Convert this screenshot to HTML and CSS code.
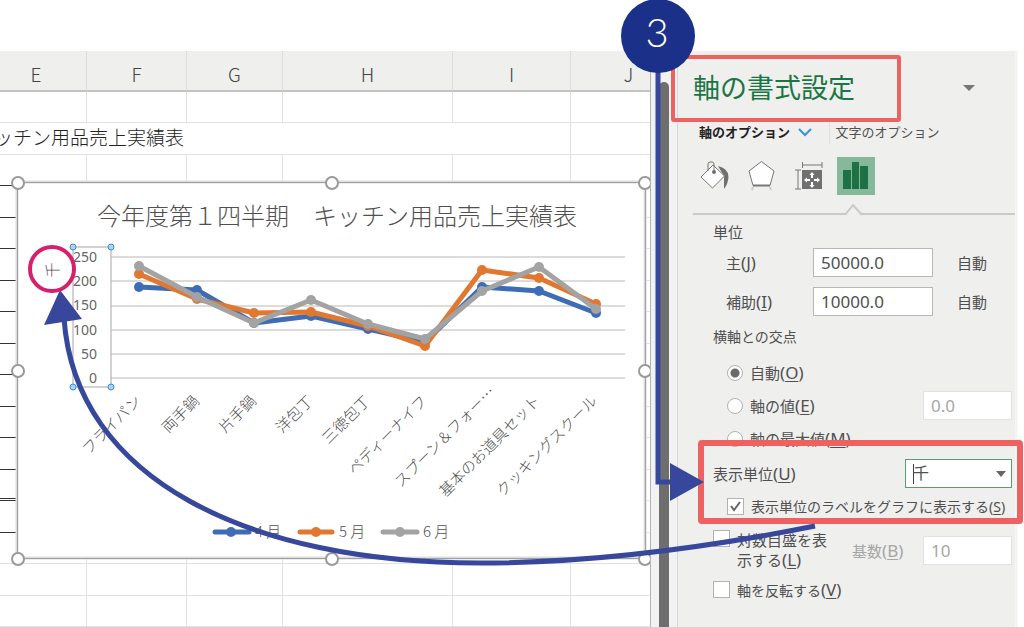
FILE: index.html
```html
<!DOCTYPE html>
<html lang="ja">
<head>
<meta charset="utf-8">
<title>軸の書式設定</title>
<link rel="stylesheet" href="styles.css">
</head>
<body>
<div class="app">
  <main class="sheet">
    <table class="grid">
      <colgroup><col class="c-e"><col class="c-f"><col class="c-g"><col class="c-h"><col class="c-i"><col class="c-j"></colgroup>
      <thead><tr><th>E</th><th>F</th><th>G</th><th>H</th><th>I</th><th>J</th></tr></thead>
      <tbody>
        <tr><td></td><td></td><td></td><td></td><td></td><td></td></tr>
        <tr><td colspan="5" class="heading">ッチン用品売上実績表</td><td></td></tr>
        <tr class="ruled"><td></td><td></td><td></td><td></td><td></td><td></td></tr>
        <tr class="ruled"><td></td><td></td><td></td><td></td><td></td><td></td></tr>
        <tr class="ruled"><td></td><td></td><td></td><td></td><td></td><td></td></tr>
        <tr class="ruled"><td></td><td></td><td></td><td></td><td></td><td></td></tr>
        <tr class="ruled"><td></td><td></td><td></td><td></td><td></td><td></td></tr>
        <tr class="ruled"><td></td><td></td><td></td><td></td><td></td><td></td></tr>
        <tr class="ruled"><td></td><td></td><td></td><td></td><td></td><td></td></tr>
        <tr class="ruled"><td></td><td></td><td></td><td></td><td></td><td></td></tr>
        <tr class="ruled"><td></td><td></td><td></td><td></td><td></td><td></td></tr>
        <tr class="ruled"><td></td><td></td><td></td><td></td><td></td><td></td></tr>
        <tr class="ruled total"><td></td><td></td><td></td><td></td><td></td><td></td></tr>
        <tr class="ruled"><td></td><td></td><td></td><td></td><td></td><td></td></tr>
        <tr><td></td><td></td><td></td><td></td><td></td><td></td></tr>
        <tr><td></td><td></td><td></td><td></td><td></td><td></td></tr>
        <tr><td></td><td></td><td></td><td></td><td></td><td></td></tr>
        <tr><td></td><td></td><td></td><td></td><td></td><td></td></tr>
      </tbody>
    </table>
    <svg class="chart" width="651" height="400" viewBox="0 170 651 400">
      <rect class="frame-back" x="17" y="182" width="628" height="376"/>
      <path class="frame" d="M17.500 182.500H645.500V558.500H17.500Z"/>
      <text class="chart-title" x="337" y="225">今年度第１四半期　キッチン用品売上実績表</text>
      <path class="gridlines" d="M111 257H625M111 281H625M111 306H625M111 330H625M111 354H625M111 378H625"/>
      <rect class="axis-box" x="73" y="247" width="38" height="140"/>
      <g class="axis">
        <text x="97" y="262">250</text><text x="97" y="286">200</text><text x="97" y="310">150</text>
        <text x="97" y="335">100</text><text x="97" y="359">50</text><text x="97" y="383">0</text>
      </g>
      <g class="axis-grips"><circle cx="73" cy="247" r="3"/><circle cx="111" cy="247" r="3"/><circle cx="73" cy="387" r="3"/><circle cx="111" cy="387" r="3"/></g>
      <text class="unit" transform="translate(58 270) rotate(-90)">千</text>
      <g class="series april"><polyline points="139,287 197,290 254,323 311,316 368,329 425,342 482,287 539,291 596,313"/>
        <circle cx="139" cy="287" r="5"/><circle cx="197" cy="290" r="5"/><circle cx="254" cy="323" r="5"/><circle cx="311" cy="316" r="5"/><circle cx="368" cy="329" r="5"/><circle cx="425" cy="342" r="5"/><circle cx="482" cy="287" r="5"/><circle cx="539" cy="291" r="5"/><circle cx="596" cy="313" r="5"/></g>
      <g class="series may"><polyline points="139,274 197,299 254,313 311,312 368,326 425,346 482,270 539,278 596,304"/>
        <circle cx="139" cy="274" r="5"/><circle cx="197" cy="299" r="5"/><circle cx="254" cy="313" r="5"/><circle cx="311" cy="312" r="5"/><circle cx="368" cy="326" r="5"/><circle cx="425" cy="346" r="5"/><circle cx="482" cy="270" r="5"/><circle cx="539" cy="278" r="5"/><circle cx="596" cy="304" r="5"/></g>
      <g class="series june"><polyline points="139,266 197,297 254,323 311,300 368,324 425,339 482,291 539,267 596,309"/>
        <circle cx="139" cy="266" r="5"/><circle cx="197" cy="297" r="5"/><circle cx="254" cy="323" r="5"/><circle cx="311" cy="300" r="5"/><circle cx="368" cy="324" r="5"/><circle cx="425" cy="339" r="5"/><circle cx="482" cy="291" r="5"/><circle cx="539" cy="267" r="5"/><circle cx="596" cy="309" r="5"/></g>
      <g class="categories">
        <text transform="translate(142 402) rotate(-45)">フライパン</text>
        <text transform="translate(200 402) rotate(-45)">両手鍋</text>
        <text transform="translate(257 402) rotate(-45)">片手鍋</text>
        <text transform="translate(314 402) rotate(-45)">洋包丁</text>
        <text transform="translate(371 402) rotate(-45)">三徳包丁</text>
        <text transform="translate(428 402) rotate(-45)">ペディーナイフ</text>
        <text transform="translate(496 393) rotate(-45)">スプーン＆フォー…</text>
        <text transform="translate(541 402) rotate(-45)">基本のお道具セット</text>
        <text transform="translate(598 402) rotate(-45)">クッキングスクール</text>
      </g>
      <g class="series april"><path d="M215 532H249"/><circle cx="231" cy="532" r="5"/></g>
      <g class="series may"><path d="M300 532H332"/><circle cx="316" cy="532" r="5"/></g>
      <g class="series june"><path d="M383 532H417"/><circle cx="400" cy="532" r="5"/></g>
      <g class="legend"><text x="255" y="537">4 月</text><text x="339" y="537">5 月</text><text x="423" y="537">6 月</text></g>
      <g class="grips"><circle cx="18" cy="183" r="6"/><circle cx="332" cy="183" r="6"/><circle cx="645" cy="183" r="6"/><circle cx="18" cy="371" r="6"/><circle cx="645" cy="371" r="6"/><circle cx="18" cy="559" r="6"/><circle cx="332" cy="559" r="6"/><circle cx="645" cy="559" r="6"/></g>
    </svg>
  </main>

  <div class="scroll"><div class="thumb"></div></div>

  <aside class="pane">
    <header class="pane-head">
      <h1>軸の書式設定</h1>
      <button class="menu" aria-label="メニュー"><svg width="12" height="6"><path d="M0 0H12L6 6Z"/></svg></button>
    </header>
    <nav class="tabs">
      <button class="tab current">軸のオプション <svg width="14" height="9"><path d="M1 1L7 7L13 1"/></svg></button>
      <button class="tab">文字のオプション</button>
    </nav>
    <div class="icons">
      <button aria-label="塗りつぶしと線"><svg width="38" height="38"><path class="ink" d="M22 9Q33 12 32.500 20Q32 27 28 32V19Z"/><path class="line" d="M17 8L28.500 19L16.500 31L5 20Z"/><path class="none" d="M12 14V7Q12 5 14 5H16Q18 5 18 7V15"/><circle class="ink" cx="18" cy="15" r="2"/></svg></button>
      <button aria-label="効果"><svg width="38" height="38"><path class="line" d="M18.500 4.500L31 14L27 28.500H10L6 14Z"/><path class="heavy" d="M10 28.500H27"/><path class="faint" d="M10 30L9 33M27 30L28 33"/></svg></button>
      <button aria-label="サイズとプロパティ"><svg width="38" height="38"><path class="ink" d="M12 13H32V32H12Z"/><path class="none" d="M13 8H32M12.500 5V11M32 5V11M8 13V32M5 13H11M5 32H11"/><path class="arrows" d="M22 15L24.500 18H23V21H21V18H19.500ZM22 31L24.500 28H23V25H21V28H19.500ZM14 23L17 20.500V22H20V24H17V25.500ZM30 23L27 20.500V22H24V24H27V25.500Z"/></svg></button>
      <button class="active" aria-label="軸のオプション"><svg width="38" height="38"><path class="bars" d="M6 13H14V32H6ZM15 5H22V32H15ZM23 9H31V32H23Z"/></svg><svg class="notch" width="20" height="12"><path d="M1 11L9 1L18 11"/></svg></button>
    </div>
    <form class="options">
      <div class="row caption">単位</div>
      <div class="row field"><label for="major">主<span class="key">(<u>J</u>)</span></label><input id="major" type="text" value="50000.0"><span class="auto">自動</span></div>
      <div class="row field second"><label for="minor">補助<span class="key">(<u>I</u>)</span></label><input id="minor" type="text" value="10000.0"><span class="auto">自動</span></div>
      <div class="row cross">横軸との交点</div>
      <div class="row choice"><input type="radio" name="cross" id="auto" checked><label for="auto">自動<span class="key">(<u>O</u>)</span></label></div>
      <div class="row choice value"><input type="radio" name="cross" id="val"><label for="val">軸の値<span class="key">(<u>E</u>)</span></label><input class="end" type="text" value="0.0" aria-label="軸の値" disabled></div>
      <div class="row choice"><input type="radio" name="cross" id="max"><label for="max">軸の最大値<span class="key">(<u>M</u>)</span></label></div>
      <div class="row units"><label for="unit">表示単位<span class="key">(<u>U</u>)</span></label><select id="unit"><option>千</option></select></div>
      <div class="row choice show"><input type="checkbox" id="show" checked><label for="show">表示単位のラベルをグラフに表示する(<u>S</u>)</label></div>
      <div class="row log"><input type="checkbox" id="log"><label class="wrap" for="log">対数目盛を表示する<span class="key">(<u>L</u>)</span></label><label class="base" for="base">基数<span class="key">(<u>B</u>)</span></label><input class="end" id="base" type="text" value="10" disabled></div>
      <div class="row reverse"><input type="checkbox" id="rev"><label for="rev">軸を反転する<span class="key">(<u>V</u>)</span></label></div>
    </form>
  </aside>
  <div class="edge"></div>

  <svg class="notes" width="1024" height="627">
    <rect class="red" x="673" y="57" width="226" height="63" rx="1"/>
    <rect class="red thick" x="701" y="443" width="319" height="78" rx="1"/>
    <path class="blue" d="M658 60V482H675"/>
    <path class="blue-head" d="M670 463L704 482L670 501Z"/>
    <path class="blue" d="M815 526C700 549 590 563 480 563C250 563 75 480 64 318"/>
    <path class="blue-head" d="M60 290L44 325L82 319Z"/>
    <circle class="pink" cx="52" cy="269" r="22"/>
    <circle class="badge" cx="658" cy="36" r="37"/>
    <text class="step" x="657" y="47">3</text>
  </svg>
</div>
</body>
</html>
```
FILE: styles.css
```css
* { box-sizing: border-box; }
body {
  margin: 0;
  background: #fff;
  color: #505050;
  font-family: "Noto Sans", "Noto Sans CJK JP", sans-serif;
  font-size: 15px;
}
button { border: 0; padding: 0; background: none; font: inherit; color: inherit; }
.app {
  position: relative;
  display: grid;
  grid-template-columns: minmax(0, 1fr) 26px 338px 9px;
  min-height: 100vh;
  padding-top: 51px;
  overflow: hidden;
}

/* worksheet */
.sheet { position: relative; overflow: hidden; height: calc(100vh - 51px); border-right: 1px solid #b4b4b4; }
.grid { table-layout: fixed; width: 701px; margin-left: -14px; border-collapse: separate; border-spacing: 0; }
.c-e { width: 101px; }
.c-f { width: 100px; }
.c-g { width: 96px; }
.c-h { width: 170px; }
.c-i { width: 118px; }
.c-j { width: 116px; }
.grid th {
  height: 41px;
  padding: 7px 0 0;
  border-bottom: 2px solid #c4c4c4;
  border-right: 1px solid #dcdcdc;
  background: #efefee;
  color: #444;
  font-family: "Noto Sans CJK JP", sans-serif;
  font-weight: 300;
  font-size: 19px;
  line-height: 30px;
}
.grid td { height: 31px; padding: 0; border-right: 1px solid #e2e2e2; border-bottom: 1px solid #e2e2e2; }
.grid tr:nth-child(even) td { height: 32px; }
.grid .ruled td:first-child { border-bottom-color: #333; }
.grid .total td:first-child { border-bottom: 3px double #333; }
.grid .heading {
  padding: 0 0 4px 8px;
  color: #222;
  font-family: "Noto Sans CJK JP", sans-serif;
  font-weight: 300;
  font-size: 19px;
  line-height: 26px;
}

/* chart */
.chart { position: absolute; left: 0; top: 119px; font-family: "Noto Sans CJK JP", sans-serif; font-weight: 300; font-size: 15px; fill: #505050; }
.frame-back { fill: #fff; stroke: #dcdcdc; stroke-width: 3; }
.frame { fill: none; stroke: #a0a0a0; }
.chart-title { font-size: 24px; text-anchor: middle; }
.gridlines { stroke: #dcdcdc; stroke-width: 2; }
.axis-box { fill: none; stroke: #a6a6a6; }
.axis { font-family: "Noto Sans", sans-serif; font-weight: 400; font-size: 14px; text-anchor: end; fill: #666; }
.axis-grips { fill: #a9d3f0; stroke: #3d8fcb; }
.unit { text-anchor: middle; }
.categories { text-anchor: end; }
.series { stroke-width: 5; stroke-linejoin: round; stroke-linecap: round; }
.series polyline { fill: none; }
.series circle { stroke: none; }
.april { stroke: #3f6db5; fill: #3f6db5; }
.may { stroke: #e27830; fill: #e27830; }
.june { stroke: #a3a3a3; fill: #a3a3a3; }
.grips { fill: #fff; stroke: #999; stroke-width: 2; }

/* scroll bar */
.scroll { padding: 31px 8px 0; background: #f2f2f2; }
.thumb { height: 100%; border-radius: 5px 5px 0 0; background: #6e6e6e; }

/* format pane */
.pane { border-left: 1px solid #d6d6d6; background: #efefee; padding-left: 15px; }
.pane-head { display: flex; align-items: center; justify-content: space-between; height: 68px; padding: 6px 40px 0 0; }
.pane-head h1 { margin: 0; color: #1c7544; font-size: 27px; font-weight: 400; line-height: 36px; }
.menu { display: flex; fill: #777; }
.tabs { display: flex; height: 25px; font-size: 13px; padding-left: 6px; }
.tab { white-space: nowrap; }
.tab + .tab { margin-left: 17px; padding-left: 5px; border-left: 1px solid #e2e2e2; }
.tab.current { font-weight: 700; color: #222; }
.tab svg { margin-left: 5px; fill: none; stroke: #3a93d0; stroke-width: 2; }
.icons { display: flex; gap: 9px; padding: 13px 0 18px 3px; border-bottom: 2px solid #cacaca; }
.icons button { position: relative; width: 38px; height: 38px; }
.icons svg { display: block; }
.icons .active { background: #86b99c; }
.ink { fill: #6f706f; }
.line { fill: #fff; stroke: #777; }
.none { fill: none; stroke: #777; }
.heavy { stroke: #777; stroke-width: 2; }
.faint { stroke: #ccc; stroke-width: 2; fill: none; }
.arrows { fill: #fff; }
.bars { fill: #1e7145; }
.icons .notch { position: absolute; left: 7px; top: 47px; fill: #efefee; stroke: #cacaca; stroke-width: 2; }
.options { padding: 0 3px 0 20px; }
.row { display: flex; align-items: center; height: 33px; white-space: nowrap; }
.row u { text-underline-offset: 2px; }
.key { font-size: 17px; line-height: 20px; }
.caption { height: 32px; }
.field { height: 30px; padding-left: 13px; }
.second { margin-top: 9px; }
.field label { width: 87px; }
.auto { margin-left: 24px; }
.cross { height: 40px; font-size: 14px; }
input[type="text"], select {
  height: 29px;
  border: 1px solid #b8b8b8;
  border-radius: 0;
  background: #fff;
  color: #505050;
  font: 17px "Noto Sans", "Noto Sans CJK JP", sans-serif;
  padding: 0 7px;
}
.field input { width: 120px; }
input.end { width: 89px; margin-left: auto; border-color: #e2e2e2; color: #a6a6a6; }
.choice { padding-left: 14px; }
input[type="radio"], input[type="checkbox"] {
  appearance: none;
  flex: none;
  width: 16px;
  height: 16px;
  margin: 0 7px 0 0;
  border: 1px solid #b2b2b2;
  background: #fff;
}
input[type="radio"] { border-radius: 50%; }
input[type="radio"]:checked { background: radial-gradient(circle, #6a6a6a 4px, #fff 5px); }
input[type="checkbox"] { width: 17px; height: 17px; }
input[type="checkbox"]:checked { background: #fff url("data:image/svg+xml,%3Csvg xmlns='http://www.w3.org/2000/svg' width='15' height='15'%3E%3Cpath d='M3 7L6 11L12 3' fill='none' stroke='%23666' stroke-width='2'/%3E%3C/svg%3E"); }
.units { height: 36px; }
.units select {
  width: 107px;
  margin-left: auto;
  border-color: #5b9b78;
  appearance: none;
  font-size: 16px;
  background: linear-gradient(#444, #444) 7px 4px / 1px 20px no-repeat, url("data:image/svg+xml,%3Csvg xmlns='http://www.w3.org/2000/svg' width='10' height='6'%3E%3Cpath d='M0 0H10L5 6Z' fill='%23666'/%3E%3C/svg%3E") 90px 11px no-repeat, #fff;
}
.show { height: 30px; font-size: 14px; }
.log { height: 52px; padding-top: 6px; }
.log input[type="checkbox"] { align-self: flex-start; margin-top: 3px; }
.wrap { width: 100px; white-space: normal; line-height: 20px; }
.base { margin-left: 15px; color: #a6a6a6; }
.reverse { font-size: 14px; }
.edge { width: 3px; background: #f6f6f5; }

/* callouts */
.notes { position: absolute; left: 0; top: 0; pointer-events: none; }
.red { fill: none; stroke: #ee6161; stroke-width: 4; }
.thick { stroke-width: 6; }
.blue { fill: none; stroke: #37489c; stroke-width: 5; }
.blue-head { fill: #37489c; }
.pink { fill: none; stroke: #d7206b; stroke-width: 4; }
.badge { fill: #1b3088; }
.step { fill: #fff; font-family: Lato, sans-serif; font-weight: 300; font-size: 40px; text-anchor: middle; }
```
